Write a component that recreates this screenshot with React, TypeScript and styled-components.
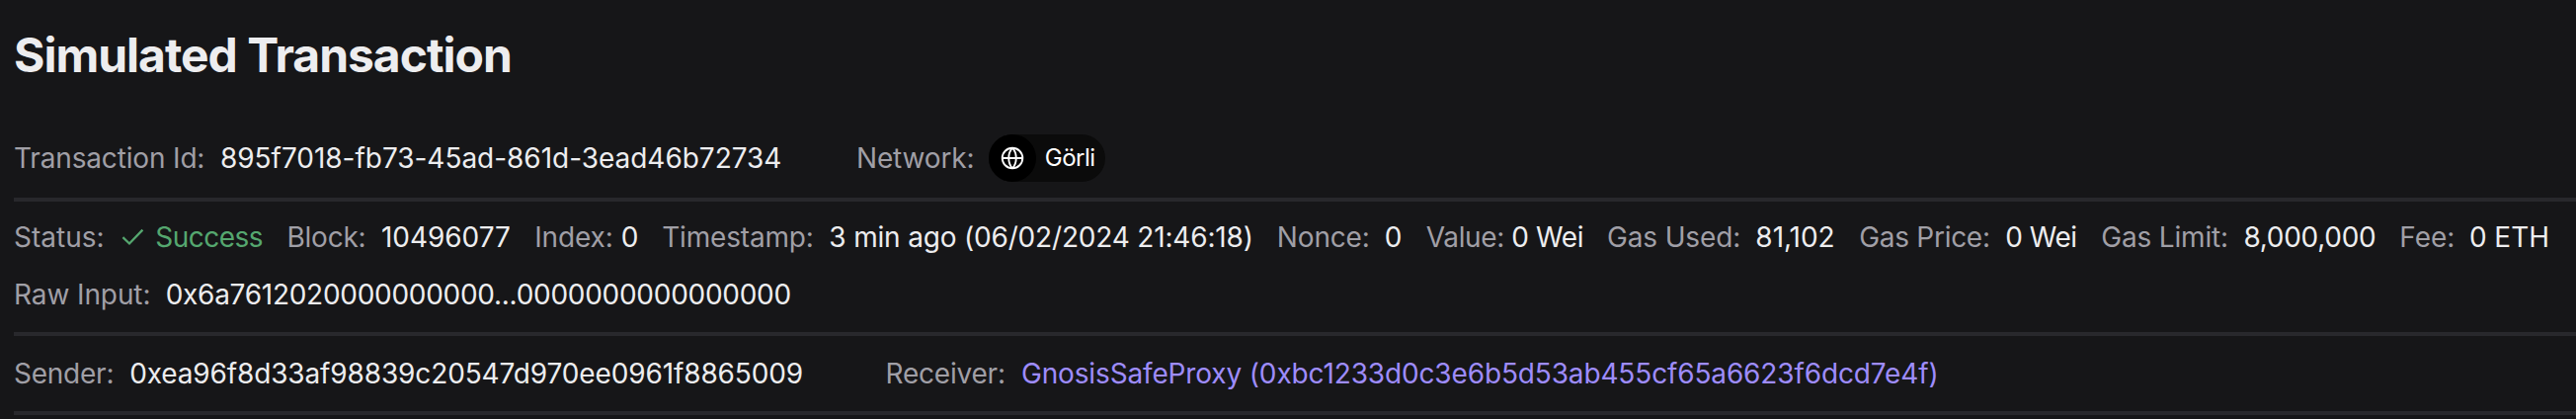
import React from 'react';
import styled, { createGlobalStyle } from 'styled-components';

const Global = createGlobalStyle`
  body { margin: 0; background: #161618; }
  * { box-sizing: border-box; }
`;
const Page = styled.main`
  width: 2608px;
  height: 424px;
  overflow: hidden;
  padding-left: 14px;
  background: #161618;
  color: #ededef;
  font: 400 28px/40px Inter, sans-serif;
  white-space: nowrap;
`;
const Title = styled.h1`
  margin: 0;
  padding-top: 27px;
  height: 120px;
  font-size: 48px;
  line-height: 57px;
  font-weight: 700;
  letter-spacing: -1.02px;
`;
const Section = styled.section<{ $height: number }>`
  display: flex;
  flex-direction: column;
  justify-content: center;
  gap: 18px;
  height: ${p => p.$height}px;
  border-bottom: 4px solid #28282c;
`;
const DetailsSection = styled(Section)`
  justify-content: flex-start;
  padding-top: 16px;
`;
const Row = styled.div`
  display: flex;
  align-items: center;
  height: 40px;
`;
const Field = styled.div<{ $after: number }>`
  display: flex;
  flex: none;
  align-items: center;
  margin-right: ${p => p.$after}px;
`;
const Label = styled.span<{ $gap: number; $tracking: number }>`
  color: #a09fa6;
  margin-right: ${p => p.$gap}px;
  letter-spacing: ${p => p.$tracking}px;
`;
const tones = { normal: '#ededef', success: '#55a76f', link: '#9e8cfc' };
const Value = styled.span<{ $tone: keyof typeof tones; $tracking: number }>`
  color: ${p => tones[p.$tone]};
  letter-spacing: ${p => p.$tracking}px;
`;
const CheckIcon = styled.svg`
  width: 26px;
  height: 24px;
  margin-right: 9.2px;
  fill: none;
  stroke: #55a76f;
  stroke-width: 2.3;
`;
const Badge = styled.span`
  display: flex;
  width: 118px;
  height: 48px;
  border-radius: 24px;
  background: #0b0b0b;
  color: #fff;
`;
const BadgeIcon = styled.span`
  display: flex;
  align-items: center;
  justify-content: center;
  width: 48px;
  height: 48px;
  border-radius: 50%;
  background: #000;
`;
const BadgeText = styled.span`
  margin-left: 8.5px;
  font-size: 24px;
  line-height: 47px;
  letter-spacing: -0.48px;
`;

type ItemProps = {
  label: string;
  lt: number;
  gap: number;
  value?: string;
  vt?: number;
  after?: number;
  tone?: keyof typeof tones;
  children?: React.ReactNode;
};
const Item = ({ label, lt, gap, value, vt = 0, after = 0, tone = 'normal', children }: ItemProps) => (
  <Field $after={after}>
    <Label $gap={gap} $tracking={lt}>{label}</Label>
    {children}
    {value && <Value $tone={tone} $tracking={vt}>{value}</Value>}
  </Field>
);

const details: ItemProps[] = [
  { label: 'Block:', lt: -0.21, gap: 15.5, value: '10496077', vt: -0.04, after: 24.4 },
  { label: 'Index:', lt: -0.14, gap: 8.2, value: '0', after: 23.7 },
  { label: 'Timestamp:', lt: -0.18, gap: 15.7, value: '3 min ago (06/02/2024 21:46:18)', vt: -0.18, after: 24.1 },
  { label: 'Nonce:', lt: -0.15, gap: 15, value: '0', after: 24.4 },
  { label: 'Value:', lt: -0.38, gap: 7.4, value: '0 Wei', vt: -0.38, after: 23.9 },
  { label: 'Gas Used:', lt: -0.16, gap: 15.3, value: '81,102', vt: -0.04, after: 24.6 },
  { label: 'Gas Price:', lt: -0.28, gap: 15.5, value: '0 Wei', vt: -0.5, after: 24.8 },
  { label: 'Gas Limit:', lt: -0.18, gap: 15.5, value: '8,000,000', vt: -0.3, after: 23.9 },
  { label: 'Fee:', lt: -0.02, gap: 14.6, value: '0 ETH', vt: -0.06 },
];

export default function App() {
  return (
    <Page>
      <Global />
      <Title>Simulated Transaction</Title>
      <Section $height={84}>
        <Row>
          <Item label="Transaction Id:" lt={-0.16} gap={15.7} value="895f7018-fb73-45ad-861d-3ead46b72734" vt={-0.03} after={75.6} />
          <Item label="Network:" lt={-0.14} gap={14.8}>
            <Badge>
              <BadgeIcon>
                <svg width="24" height="24" viewBox="0 0 24 24" fill="none" stroke="#fff" strokeWidth="1.9">
                  <circle cx="12" cy="12" r="10.3" />
                  <path d="M1.5 12h21M12 1.6c-5 5.4-5 15.4 0 20.8M12 1.6c5 5.4 5 15.4 0 20.8" />
                </svg>
              </BadgeIcon>
              <BadgeText>Görli</BadgeText>
            </Badge>
          </Item>
        </Row>
      </Section>
      <DetailsSection $height={136}>
        <Row>
          <Item label="Status:" lt={0} gap={16.6} value="Success" vt={-0.55} after={24.5} tone="success">
            <CheckIcon viewBox="0 0 26 24"><path d="M2.4 12.2 9 18.5 22.4 4.6" /></CheckIcon>
          </Item>
          {details.map(d => <Item key={d.label} {...d} />)}
        </Row>
        <Row>
          <Item label="Raw Input:" lt={-0.1} gap={15.3} value="0x6a7612020000000000...0000000000000000" vt={-0.28} />
        </Row>
      </DetailsSection>
      <Section $height={80}>
        <Row>
          <Item label="Sender:" lt={-0.24} gap={15.9} value="0xea96f8d33af98839c20547d970ee0961f8865009" vt={-0.13} after={83.5} />
          <Item label="Receiver:" lt={-0.21} gap={16.1} value="GnosisSafeProxy (0xbc1233d0c3e6b5d53ab455cf65a6623f6dcd7e4f)" vt={-0.14} tone="link" />
        </Row>
      </Section>
    </Page>
  );
}
